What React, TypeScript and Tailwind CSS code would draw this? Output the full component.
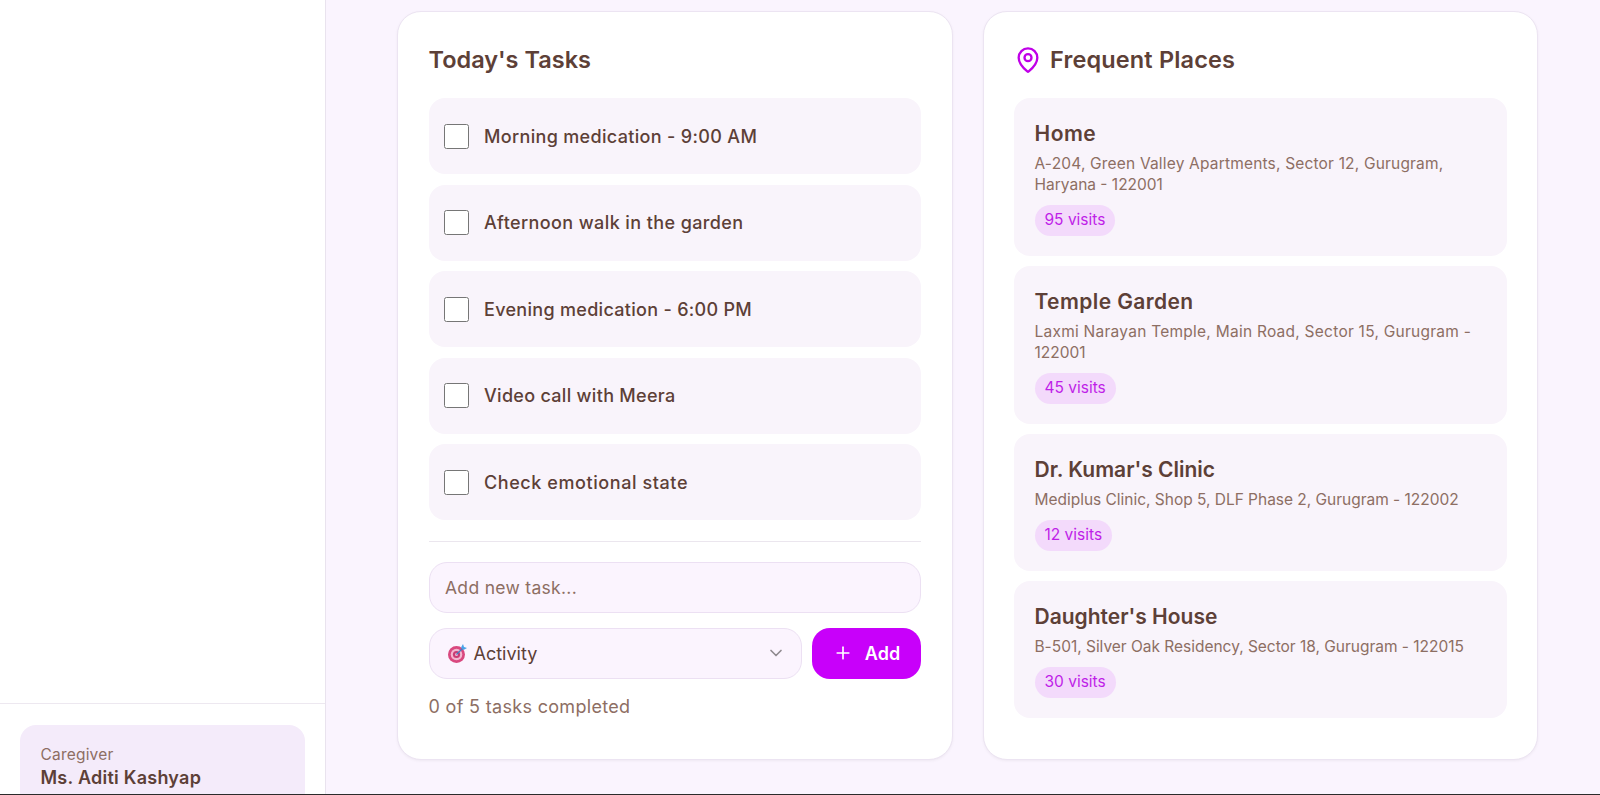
import { ChevronDown, MapPin, Plus } from "lucide-react";

const tasks = [
  { text: "Morning medication - 9:00 AM", track: "tracking-[0.33px]" },
  { text: "Afternoon walk in the garden", track: "tracking-[0.4px]" },
  { text: "Evening medication - 6:00 PM", track: "tracking-[0.3px]" },
  { text: "Video call with Meera", track: "tracking-[0.3px]" },
  { text: "Check emotional state", track: "tracking-[0.58px]" },
];

const places = [
  {
    name: "Home",
    nameTrack: "tracking-[0.5px]",
    address: [
      { text: "A-204, Green Valley Apartments, Sector 12, Gurugram,", track: "tracking-[0.18px]" },
      { text: "Haryana - 122001", track: "tracking-[0px]" },
    ],
    visits: "95 visits",
  },
  {
    name: "Temple Garden",
    nameTrack: "tracking-[0.4px]",
    address: [
      { text: "Laxmi Narayan Temple, Main Road, Sector 15, Gurugram -", track: "tracking-[0.25px]" },
      { text: "122001", track: "tracking-[0px]" },
    ],
    visits: "45 visits",
  },
  {
    name: "Dr. Kumar's Clinic",
    nameTrack: "tracking-[0px]",
    address: [{ text: "Mediplus Clinic, Shop 5, DLF Phase 2, Gurugram - 122002", track: "tracking-[-0.02px]" }],
    visits: "12 visits",
  },
  {
    name: "Daughter's House",
    nameTrack: "tracking-[0px]",
    address: [{ text: "B-501, Silver Oak Residency, Sector 18, Gurugram - 122015", track: "tracking-[-0.02px]" }],
    visits: "30 visits",
  },
];

function DartIcon() {
  return (
    <svg width="21" height="21" viewBox="0 0 21 21" className="shrink-0">
      <circle cx="9.5" cy="11.5" r="8.5" fill="#d9487f" />
      <circle cx="9.5" cy="11.5" r="5.8" fill="#f3b6cf" />
      <circle cx="9.5" cy="11.5" r="3.6" fill="#c93d74" />
      <circle cx="9.5" cy="11.5" r="1.5" fill="#f3b6cf" />
      <path d="M9.5 11.5 L16 5" stroke="#3f7fc4" strokeWidth="1.3" />
      <path d="M14 4.5 L16 1 L17 4 L20 5 L16.5 7 Z" fill="#4aa3e8" />
    </svg>
  );
}

export default function App() {
  return (
    <div className="flex h-[795px] w-full flex-col overflow-hidden bg-[#faf4fe] font-['Inter','Liberation_Sans',sans-serif]">
      <div className="flex min-h-0 flex-1">
        <aside className="flex h-full w-[326px] shrink-0 flex-col border-r border-[#e9e3ee] bg-white">
          <div className="h-[704px] shrink-0 border-b border-[#ede8f0]" />
          <div className="px-[20px] pt-[21px]">
            <div className="h-[110px] rounded-[16px] bg-[#f4ebfa] px-[20.5px] pt-[20px]">
              <p className="text-[15.5px] leading-[20px] tracking-[0.2px] text-[#8d6e63]">Caregiver</p>
              <p className="text-[18px] font-semibold leading-[26px] tracking-[0.25px] text-[#5d4037]">Ms. Aditi Kashyap</p>
            </div>
          </div>
        </aside>

        <main className="min-w-0 flex-1 pl-[71px] pt-[11px]">
          <div className="grid h-[749px] w-[1141px] grid-cols-2 gap-[30px]">
            <section className="rounded-[24px] border border-[#ece4f2] bg-white px-[30.5px] pt-[31px] shadow-[0_1px_3px_rgba(0,0,0,0.05)]">
              <h2 className="text-[23.5px] font-semibold leading-[34px] text-[#5d4037]">Today's Tasks</h2>
              <div className="mt-[21px] flex flex-col gap-[10.6px]">
                {tasks.map((t) => (
                  <label key={t.text} className="flex h-[76px] items-center gap-[15px] rounded-[16px] bg-[#f9f4fb] pl-[15.5px]">
                    <input type="checkbox" className="m-0 h-[25px] w-[25px] shrink-0" />
                    <span className={`text-[18px] font-medium text-[#5d4037] ${t.track}`}>{t.text}</span>
                  </label>
                ))}
              </div>
              <div className="mt-[20.6px] h-px bg-[#ebe6ee]" />
              <input
                placeholder="Add new task..."
                className="mt-[20px] h-[51px] w-full rounded-[18px] border border-[#ece0f3] bg-[#fbf4fe] px-[15.5px] text-[17.5px] tracking-[0.3px] text-[#5d4037] placeholder:text-[#8d6e63]"
              />
              <div className="mt-[15px] flex h-[51px] gap-[10.5px]">
                <div className="flex flex-1 items-center rounded-[18px] border border-[#ece0f3] bg-[#fbf4fe] pl-[17px] pr-[15px]">
                  <DartIcon />
                  <span className="ml-[6px] text-[18px] text-[#5d4037]">Activity</span>
                  <ChevronDown size={20} className="ml-auto text-[#8f8a8f]" />
                </div>
                <button className="flex w-[109px] items-center justify-center gap-[12px] rounded-[18px] bg-[#c800fa] text-[18px] font-semibold text-white">
                  <Plus size={20} />
                  Add
                </button>
              </div>
              <p className="mt-[14px] text-[18px] leading-[28px] tracking-[0.32px] text-[#8d6e63]">0 of 5 tasks completed</p>
            </section>

            <section className="rounded-[24px] border border-[#ece4f2] bg-white px-[30.5px] pt-[31px] shadow-[0_1px_3px_rgba(0,0,0,0.05)]">
              <h2 className="flex h-[34px] items-center gap-[8px] text-[23.5px] font-semibold tracking-[0.15px] text-[#5d4037]">
                <MapPin size={28} className="text-[#c000e8]" />
                Frequent Places
              </h2>
              <div className="mt-[21px] flex flex-col gap-[10.5px]">
                {places.map((p) => (
                  <div key={p.name} className="rounded-[16px] bg-[#f9f4fb] px-[20.5px] pb-[20px] pt-[21px]">
                    <h3 className={`text-[21px] font-semibold leading-[30px] text-[#5d4037] ${p.nameTrack}`}>{p.name}</h3>
                    <div className="mt-[4px] text-[15.5px] leading-[21px] text-[#8d6e63]">
                      {p.address.map((l) => (
                        <p key={l.text} className={l.track}>
                          {l.text}
                        </p>
                      ))}
                    </div>
                    <span className="mt-[9.5px] inline-flex h-[31px] items-center rounded-full bg-[#f3dafb] px-[10px] text-[15.5px] text-[#bf1fe8]">
                      {p.visits}
                    </span>
                  </div>
                ))}
              </div>
            </section>
          </div>
        </main>
      </div>
      <div className="h-px shrink-0 bg-[#2b2b2b]" />
    </div>
  );
}
